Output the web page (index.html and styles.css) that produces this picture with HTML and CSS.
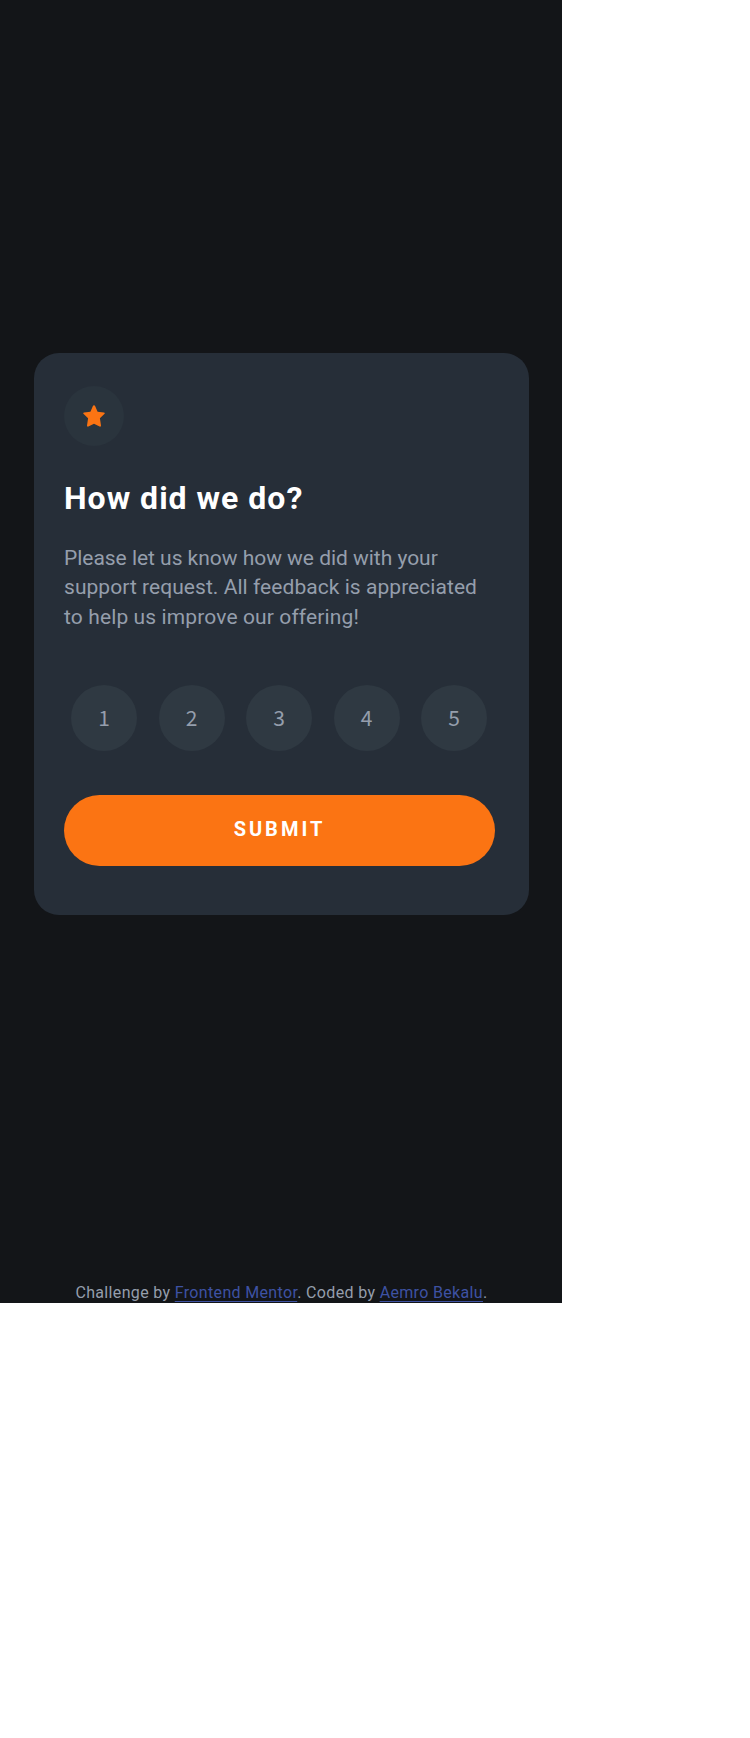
FILE: index.html
```html
<!DOCTYPE html>
<html lang="en">
<head>
<meta charset="utf-8">
<title>Interactive rating component</title>
<link rel="stylesheet" href="styles.css">
</head>
<body>
<div class="page">
  <main class="card">
    <div class="star">
      <svg width="22" height="22" viewBox="0 0 22 22"><path d="M11 .2Q11.8.2 12.1 1L14.6 6.7 20.9 7.4Q22.4 7.8 21.3 9L16.9 13.3 18 20.6Q18 22.1 16.6 21.6L11 18.8 5.4 21.6Q4 22.1 4 20.6L5.1 13.3.7 9Q-.4 7.8 1.1 7.4L7.4 6.7 9.9 1Q10.2.2 11 .2Z" fill="#fb7413"/></svg>
    </div>
    <h1 class="title">How did we do?</h1>
    <p class="text"><span class="line line-1">Please let us know how we did with your</span><span class="line line-2">support request. All feedback is appreciated</span><span class="line line-3">to help us improve our offering!</span></p>
    <div class="ratings">
      <button class="rate">1</button><button class="rate">2</button><button class="rate">3</button><button class="rate">4</button><button class="rate">5</button>
    </div>
    <button class="submit">SUBMIT</button>
  </main>
  <footer class="attribution">Challenge by <a href="#">Frontend Mentor</a>. Coded by <a href="#">Aemro Bekalu</a>.</footer>
</div>
</body>
</html>
```
FILE: styles.css
```css
* { box-sizing: border-box; }
body { margin: 0; background: #fff; font-family: Roboto, sans-serif; }
.page { width: 562px; height: 1303px; padding: 353px 33px 0 34px; background: #131518; display: flex; flex-direction: column; justify-content: space-between; }
.card { height: 562px; padding: 33px 34px 0 30px; border-radius: 25px; background: #262e38; }
.star { width: 60px; height: 60px; border-radius: 50%; background: #2a343d; display: flex; align-items: center; justify-content: center; padding-right: 1px; }
.title { margin: 32px 0 0; font-size: 32px; line-height: 40px; font-weight: 700; letter-spacing: 1px; color: #fff; white-space: nowrap; }
.text { margin: 26px 0 0; font-size: 21px; line-height: 29.4px; color: #959eac; }
.line { display: block; white-space: nowrap; }
.line-1 { letter-spacing: -.03px; }
.line-2 { letter-spacing: .05px; }
.line-3 { letter-spacing: .12px; }
.ratings { display: flex; justify-content: space-between; margin: 52.8px 8px 0 7px; }
.rate { width: 66px; height: 66px; padding: 0 0 3px; border: 0; border-radius: 50%; background: #2f3942; color: #959eac; font: 21px "Noto Sans CJK SC", sans-serif; }
.submit { display: block; width: 431px; height: 71px; margin-top: 44px; padding: 0 0 3px; border: 0; border-radius: 35.5px; background: #fb7413; color: #fff; font: 700 20px Roboto, sans-serif; letter-spacing: 3px; }
.attribution { font-size: 16px; line-height: 20px; letter-spacing: .34px; text-align: center; color: #959eac; white-space: nowrap; }
.attribution a { color: #3e52a3; text-underline-offset: 3px; }
```
